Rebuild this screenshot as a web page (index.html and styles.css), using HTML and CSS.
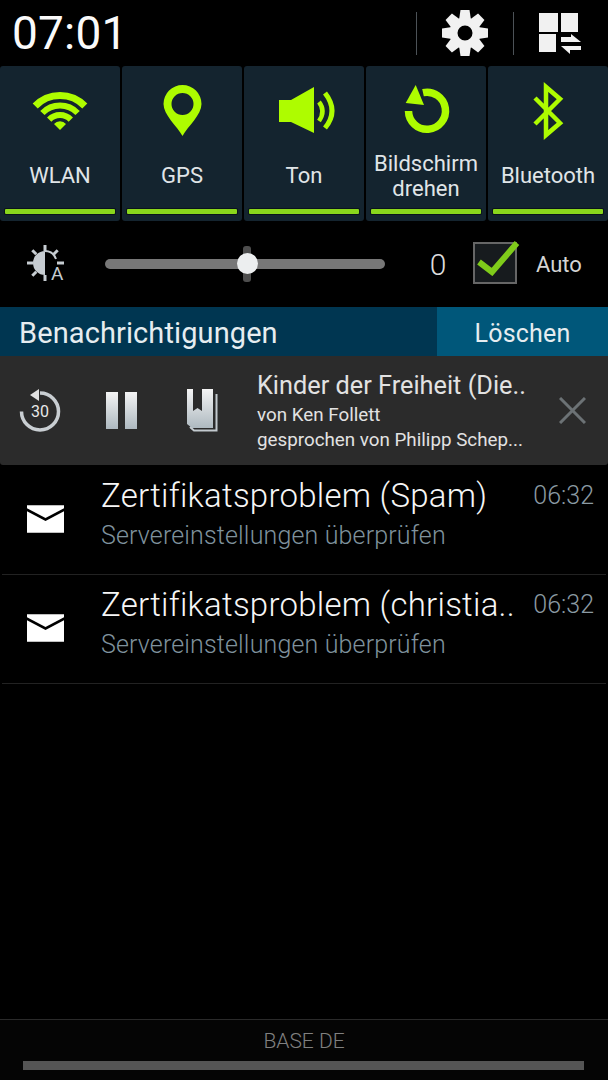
FILE: index.html
```html
<!DOCTYPE html>
<html lang="de">
<head>
    <meta charset="UTF-8">
    <meta name="viewport" content="width=device-width, initial-scale=1.0">
    <title>Benachrichtigungen</title>
    <link rel="stylesheet" href="styles.css">
</head>
<body>
    <div class="panel">
        <div class="topbar">
            <div class="clock">07:01</div>
            <div class="top-actions">
                <span class="top-divider"></span>
                <svg class="gear" viewBox="-23 -23 46 46">
                    <defs>
                        <path id="tooth" d="M-6-13L-4.5-23H4.5L6-13z"/>
                    </defs>
                    <circle class="gear-ring" r="11.5"/>
                    <use href="#tooth"/>
                    <use href="#tooth" transform="rotate(45)"/>
                    <use href="#tooth" transform="rotate(90)"/>
                    <use href="#tooth" transform="rotate(135)"/>
                    <use href="#tooth" transform="rotate(180)"/>
                    <use href="#tooth" transform="rotate(225)"/>
                    <use href="#tooth" transform="rotate(270)"/>
                    <use href="#tooth" transform="rotate(315)"/>
                </svg>
                <span class="top-divider"></span>
                <svg class="grid-icon" viewBox="0 0 42 42">
                    <rect x="0" y="1" width="19" height="19"/>
                    <rect x="22" y="1" width="17" height="19"/>
                    <rect x="0" y="22" width="17" height="18"/>
                    <path d="M22 25H32V22L42 30H22zM22 34H42V38H31V42z"/>
                </svg>
            </div>
        </div>

        <div class="tiles">
            <div class="tile">
                <svg class="tile-icon" viewBox="0 0 64 64">
                    <g class="lime-stroke">
                        <path stroke-width="7" d="M7.200 28A34.500 34.500 0 0 1 56.800 28"/>
                        <path stroke-width="6" d="M14.400 35A24.500 24.500 0 0 1 49.600 35"/>
                        <path stroke-width="6" d="M21.200 41.600A15 15 0 0 1 42.800 41.600"/>
                    </g>
                    <path class="lime" d="M32 52l-6-6a8 8 0 0 1 12 0z"/>
                </svg>
                <div class="tile-label">WLAN</div>
                <div class="tile-bar"></div>
            </div>
            <div class="tile">
                <svg class="tile-icon" viewBox="0 0 64 64">
                    <path class="lime" fill-rule="evenodd" d="M32.500 58C27 48 13.500 37 13.500 26a19 19 0 0 1 38 0C51.500 37 38 48 32.500 58zM32.500 15a11 11 0 1 0 0 22 11 11 0 0 0 0-22z"/>
                </svg>
                <div class="tile-label">GPS</div>
                <div class="tile-bar"></div>
            </div>
            <div class="tile">
                <svg class="tile-icon" viewBox="0 0 64 64">
                    <path class="lime" d="M7 22h12L42 9v46L19 44H7z"/>
                    <g class="lime-stroke">
                        <path stroke-width="4.500" d="M47 24Q54 33 47 43"/>
                        <path stroke-width="5" d="M53 15Q67 33 53 50"/>
                    </g>
                </svg>
                <div class="tile-label">Ton</div>
                <div class="tile-bar"></div>
            </div>
            <div class="tile">
                <svg class="tile-icon" viewBox="0 0 64 64">
                    <path class="lime-stroke" stroke-width="7.500" d="M29 14.700A18.500 18.500 0 1 1 14.500 33"/>
                    <path class="lime" d="M21.700 7L11.700 25l18.300 2z"/>
                </svg>
                <div class="tile-label">Bildschirm drehen</div>
                <div class="tile-bar"></div>
            </div>
            <div class="tile">
                <svg class="tile-icon" viewBox="0 0 64 64">
                    <path class="lime-stroke" stroke-width="4.500" d="M19 20L44 45 30 57V9L44 21 19 46"/>
                </svg>
                <div class="tile-label">Bluetooth</div>
                <div class="tile-bar"></div>
            </div>
        </div>

        <div class="brightness">
            <div class="brightness-icon">
                <svg viewBox="0 0 38 38">
                    <path class="sun-disc" d="M18 6a12 12 0 0 0 0 24z"/>
                    <path class="sun-line" stroke-width="2" d="M18 6a12 12 0 0 1 11 8"/>
                    <path class="sun-line" stroke-width="3" d="M18 0v6M5.300 5.300l4 4M30.700 5.300l-4 4M0 18h6M30 18h7M5.300 30.700l4-4M18 30v6"/>
                </svg>
                <span class="brightness-a">A</span>
            </div>
            <div class="slider">
                <span class="slider-nub"></span>
                <span class="slider-knob"></span>
            </div>
            <div class="brightness-value">0</div>
            <div class="checkbox">
                <svg class="check" viewBox="0 0 44 36">
                    <path d="M2 22l13 10L40 3"/>
                </svg>
            </div>
            <div class="auto-label">Auto</div>
        </div>

        <div class="notif-head">
            <div class="notif-title">Benachrichtigungen</div>
            <div class="clear-button">Löschen</div>
        </div>

        <div class="player">
            <div class="replay">
                <svg viewBox="0 0 44 44">
                    <defs>
                        <linearGradient id="metal" x1="0" y1="0" x2="0" y2="1">
                            <stop offset="0" stop-color="#f4f4f4"/>
                            <stop offset="1" stop-color="#aeb9c0"/>
                        </linearGradient>
                    </defs>
                    <path class="replay-ring" d="M22 4A18.500 18.500 0 1 1 3.500 22.500"/>
                    <path class="replay-arrow" d="M21 0v12L12 6z"/>
                </svg>
                <span class="replay-num">30</span>
            </div>
            <svg class="pause" viewBox="0 0 31 37">
                <rect x="0" y="0" width="12" height="37" fill="url(#metal)"/>
                <rect x="19" y="0" width="12" height="37" fill="url(#metal)"/>
            </svg>
            <svg class="book" viewBox="0 0 31 43">
                <path fill="url(#metal)" d="M0 0H6V22L10.500 19 15 22V0H26V39H5L0 35z"/>
                <path class="book-back" d="M29.500 5V41.500H7L3 38"/>
            </svg>
            <div class="player-text">
                <div class="player-title">Kinder der Freiheit (Die..</div>
                <div class="player-line">von Ken Follett</div>
                <div class="player-line">gesprochen von Philipp Schep...</div>
            </div>
            <svg class="close" viewBox="0 0 27 27">
                <path d="M1 1l25 25M26 1L1 26"/>
            </svg>
        </div>

        <div class="notifications">
            <div class="notif-row">
                <svg class="mail" viewBox="0 0 38 28">
                    <path d="M0 0h38v3L19 13 0 3z"/>
                    <path d="M0 6l19 10L38 6v22H0z"/>
                </svg>
                <div class="notif-body">
                    <div class="notif-name">Zertifikatsproblem (Spam)</div>
                    <div class="notif-sub">Servereinstellungen überprüfen</div>
                </div>
                <div class="notif-time">06:32</div>
            </div>
            <div class="notif-row">
                <svg class="mail" viewBox="0 0 38 28">
                    <path d="M0 0h38v3L19 13 0 3z"/>
                    <path d="M0 6l19 10L38 6v22H0z"/>
                </svg>
                <div class="notif-body">
                    <div class="notif-name">Zertifikatsproblem (christia..</div>
                    <div class="notif-sub">Servereinstellungen überprüfen</div>
                </div>
                <div class="notif-time">06:32</div>
            </div>
        </div>

        <div class="carrier">
            <div class="carrier-name">BASE DE</div>
            <div class="carrier-bar"></div>
        </div>
    </div>
</body>
</html>
```

FILE: styles.css
```css
:root {
    --lime: #aefc00;
    --bar: #8ad61c;
    --tile-bg: #14242f;
}
html, body {
    margin: 0;
    padding: 0;
    background: #000;
}
body {
    font-family: Roboto, sans-serif;
    color: #fff;
}
.panel {
    width: 608px;
    height: 1080px;
    display: flex;
    flex-direction: column;
    overflow: hidden;
}

/* top bar */
.topbar {
    height: 66px;
    display: flex;
    align-items: center;
    justify-content: space-between;
    padding: 0 27px 0 12px;
}
.clock {
    font-size: 46px;
    letter-spacing: 0.2px;
    color: #fafafa;
}
.top-actions {
    display: flex;
    align-items: center;
    gap: 25px;
}
.top-divider {
    width: 1px;
    height: 43px;
    background: #4c5257;
}
.gear {
    width: 46px;
    height: 46px;
    fill: #f1f1f1;
}
.gear-ring {
    fill: none;
    stroke: #f1f1f1;
    stroke-width: 8;
}
.grid-icon {
    width: 42px;
    height: 42px;
    fill: #f1f1f1;
}

/* quick setting tiles */
.tiles {
    display: grid;
    grid-template-columns: repeat(5, 1fr);
    gap: 2px;
}
.tile {
    height: 155px;
    box-sizing: border-box;
    padding-top: 12px;
    display: flex;
    flex-direction: column;
    align-items: center;
    background: var(--tile-bg);
    border-radius: 3px;
}
.tile-icon {
    width: 64px;
    height: 64px;
    flex: none;
}
.lime {
    fill: var(--lime);
}
.lime-stroke {
    fill: none;
    stroke: var(--lime);
}
.tile-label {
    flex: 1;
    display: flex;
    align-items: center;
    justify-content: center;
    text-align: center;
    font-size: 22px;
    line-height: 25px;
    color: #e0e5e8;
    padding: 0 4px;
}
.tile-bar {
    align-self: stretch;
    height: 5px;
    margin: 0 5px 7px;
    background: var(--bar);
    border-radius: 1px;
    box-shadow: 0 0 0 1px #0a141a;
}

/* brightness row */
.brightness {
    height: 86px;
    display: flex;
    align-items: center;
}
.brightness-icon {
    position: relative;
    width: 38px;
    height: 38px;
    margin-left: 27px;
    flex: none;
}
.brightness-icon svg {
    width: 38px;
    height: 38px;
}
.sun-disc {
    fill: #c6ccd1;
}
.sun-line {
    fill: none;
    stroke: #c6ccd1;
}
.brightness-a {
    position: absolute;
    left: 24px;
    top: 18px;
    font-size: 19px;
    line-height: 22px;
    color: #c6ccd1;
}
.slider {
    position: relative;
    width: 280px;
    height: 10px;
    margin-left: 40px;
    background: #777;
    border-radius: 5px;
}
.slider-nub {
    position: absolute;
    left: 138px;
    top: -13px;
    width: 8px;
    height: 36px;
    background: #4e4e4e;
    border-radius: 3px;
}
.slider-knob {
    position: absolute;
    left: 132px;
    top: -6px;
    width: 21px;
    height: 21px;
    background: #eceeef;
    border-radius: 50%;
}
.brightness-value {
    width: 18px;
    margin-left: 44px;
    font-size: 30px;
    font-weight: 300;
    color: #dcdcdc;
    text-align: center;
}
.checkbox {
    position: relative;
    width: 40px;
    height: 38px;
    margin: 0 0 2px 26px;
    background: #171b1e;
    border: 2px solid #666;
}
.check {
    position: absolute;
    left: 2px;
    top: -4px;
    width: 44px;
    height: 36px;
    fill: none;
    stroke: #7fcb1a;
    stroke-width: 6;
}
.auto-label {
    margin-left: 19px;
    font-size: 22px;
    color: #d4d4d4;
}

/* notification header */
.notif-head {
    height: 49px;
    display: flex;
    background: #003651;
}
.notif-title {
    flex: 1;
    padding-left: 19px;
    font-size: 29px;
    letter-spacing: 0.1px;
    line-height: 52px;
    color: #e6edf0;
}
.clear-button {
    width: 171px;
    text-align: center;
    font-size: 25px;
    letter-spacing: 0.2px;
    line-height: 53px;
    color: #e6edf0;
    background: #00577a;
}

/* audiobook player */
.player {
    height: 109px;
    flex: none;
    display: flex;
    align-items: center;
    background: #2b2b2b;
    border-radius: 0 0 3px 3px;
}
.replay {
    position: relative;
    width: 44px;
    height: 44px;
    margin-left: 18px;
    flex: none;
}
.replay svg {
    width: 44px;
    height: 44px;
}
.replay-ring {
    fill: none;
    stroke: #c9ced2;
    stroke-width: 3.500;
}
.replay-arrow {
    fill: #e2e2e2;
}
.replay-num {
    position: absolute;
    left: 0;
    right: 0;
    top: 14px;
    text-align: center;
    font-size: 16px;
    line-height: 18px;
    color: #e8e8e8;
}
.pause {
    width: 31px;
    height: 37px;
    margin-left: 44px;
    flex: none;
}
.book {
    width: 31px;
    height: 43px;
    margin-left: 50px;
    flex: none;
}
.book-back {
    fill: none;
    stroke: #c2c9ce;
    stroke-width: 2;
}
.player-text {
    width: 285px;
    margin-left: 39px;
    padding-top: 4px;
    flex: none;
}
.player-title {
    font-size: 25.300px;
    line-height: 28px;
    color: #e2e2e2;
    margin-bottom: 3px;
}
.player-line {
    font-size: 18.800px;
    line-height: 25px;
    color: #e2e2e2;
}
.close {
    width: 27px;
    height: 27px;
    margin-left: 17px;
    flex: none;
    fill: none;
    stroke: #6c7275;
    stroke-width: 3;
}

/* notification list */
.notifications {
    flex: 1;
    padding-top: 1px;
}
.notif-row {
    height: 109px;
    box-sizing: border-box;
    margin: 0 2px;
    display: flex;
    border-bottom: 1px solid #222;
}
.mail {
    width: 37px;
    height: 28px;
    margin: 39px 0 0 25px;
    fill: #fff;
    flex: none;
}
.notif-body {
    width: 420px;
    margin-left: 37px;
    flex: none;
}
.notif-name {
    font-size: 33px;
    font-weight: 300;
    letter-spacing: 0.26px;
    line-height: 38px;
    margin-top: 11px;
    color: #f6f6f6;
    white-space: nowrap;
}
.notif-sub {
    font-size: 25px;
    font-weight: 300;
    letter-spacing: 0.15px;
    line-height: 30px;
    margin-top: 6px;
    color: #7f929d;
    white-space: nowrap;
}
.notif-time {
    margin: 16px 0 0 auto;
    padding-right: 12px;
    font-size: 25px;
    font-weight: 300;
    line-height: 28px;
    color: #8b9aa3;
}

/* carrier footer */
.carrier {
    height: 61px;
    box-sizing: border-box;
    flex: none;
    background: #050505;
    border-top: 1px solid #2a2a2a;
}
.carrier-name {
    height: 41px;
    font-size: 21px;
    font-weight: 300;
    line-height: 42px;
    text-align: center;
    color: #808080;
}
.carrier-bar {
    height: 9px;
    margin: 0 24px 0 23px;
    background: #555;
}
```
